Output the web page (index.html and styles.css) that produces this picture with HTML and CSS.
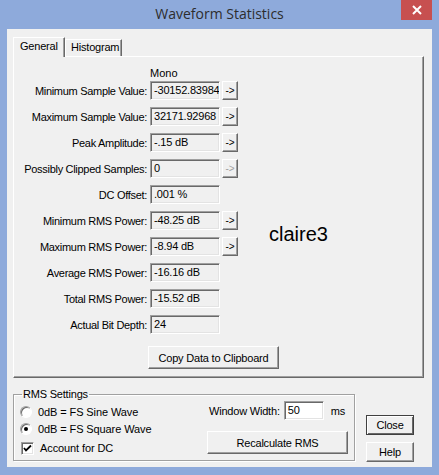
FILE: index.html
```html
<!DOCTYPE html>
<html lang="en">
<head>
    <meta charset="UTF-8">
    <title>Waveform Statistics</title>
    <link rel="stylesheet" href="styles.css">
</head>
<body>
    <div class="window">
        <div class="titlebar">
            <span class="title">Waveform Statistics</span>
            <button class="close-x" aria-label="Close">
                <svg width="10" height="10" viewBox="0 0 10 10"><path d="M1 1 L9 9 M9 1 L1 9" stroke="#fff" stroke-width="2" fill="none"/></svg>
            </button>
        </div>

        <div class="client">
            <div class="tabs">
                <div class="tab active">General</div>
                <div class="tab">Histogram</div>
            </div>

            <div class="panel">
                <div class="stats">
                    <div class="col-head">Mono</div>

                    <div class="row">
                        <span class="label">Minimum Sample Value:</span>
                        <span class="field">-30152.83984</span>
                        <button class="arrow">-&gt;</button>
                    </div>
                    <div class="row">
                        <span class="label">Maximum Sample Value:</span>
                        <span class="field">32171.92968</span>
                        <button class="arrow">-&gt;</button>
                    </div>
                    <div class="row">
                        <span class="label">Peak Amplitude:</span>
                        <span class="field">-.15 dB</span>
                        <button class="arrow">-&gt;</button>
                    </div>
                    <div class="row">
                        <span class="label">Possibly Clipped Samples:</span>
                        <span class="field">0</span>
                        <button class="arrow disabled">-&gt;</button>
                    </div>
                    <div class="row">
                        <span class="label">DC Offset:</span>
                        <span class="field">.001 %</span>
                    </div>
                    <div class="row">
                        <span class="label">Minimum RMS Power:</span>
                        <span class="field">-48.25 dB</span>
                        <button class="arrow">-&gt;</button>
                    </div>
                    <div class="row">
                        <span class="label">Maximum RMS Power:</span>
                        <span class="field">-8.94 dB</span>
                        <button class="arrow">-&gt;</button>
                    </div>
                    <div class="row">
                        <span class="label">Average RMS Power:</span>
                        <span class="field">-16.16 dB</span>
                    </div>
                    <div class="row">
                        <span class="label">Total RMS Power:</span>
                        <span class="field">-15.52 dB</span>
                    </div>
                    <div class="row">
                        <span class="label">Actual Bit Depth:</span>
                        <span class="field">24</span>
                    </div>

                    <button class="btn copy">Copy Data to Clipboard</button>
                </div>

                <div class="note">claire3</div>
            </div>

            <div class="bottom">
                <fieldset class="group">
                    <legend>RMS Settings</legend>
                    <div class="options">
                        <div class="opt"><span class="radio"></span>0dB = FS Sine Wave</div>
                        <div class="opt"><span class="radio checked"></span>0dB = FS Square Wave</div>
                        <div class="opt check-row">
                            <span class="checkbox">
                                <svg width="9" height="9" viewBox="0 0 9 9"><path d="M1 4 L3 6.5 L8 1.5" stroke="#000" stroke-width="1.8" fill="none"/></svg>
                            </span>Account for DC
                        </div>
                    </div>
                    <div class="rms-right">
                        <div class="width-row">
                            <span>Window Width:</span>
                            <span class="input">50</span>
                            <span class="unit">ms</span>
                        </div>
                        <button class="btn recalc">Recalculate RMS</button>
                    </div>
                </fieldset>

                <div class="dlg-buttons">
                    <button class="btn default">Close</button>
                    <button class="btn">Help</button>
                </div>
            </div>
        </div>
    </div>
</body>
</html>
```

FILE: styles.css
```css
/* Base */
* {
    box-sizing: border-box;
    margin: 0;
    padding: 0;
}

body {
    background: #8eaadb;
    font-family: 'Liberation Sans', Arial, sans-serif;
    font-size: 11px;
    color: #000;
    width: 439px;
    height: 475px;
    overflow: hidden;
}

button {
    font-family: inherit;
    font-size: 11px;
    color: #000;
}

/* Window frame */
.titlebar {
    height: 29px;
    display: grid;
    grid-template-columns: 1fr auto 1fr;
}

.title {
    grid-column: 2;
    font-family: 'Open Sans', sans-serif;
    font-size: 14px;
    color: #2d2d2d;
    line-height: 27px;
}

.close-x {
    grid-column: 3;
    justify-self: end;
    align-self: start;
    width: 31px;
    height: 20px;
    margin-right: 7px;
    background: #c75050;
    border: none;
    display: flex;
    align-items: center;
    justify-content: center;
}

.client {
    margin: 0 7px;
    height: 438px;
    background: #f0f0f0;
    padding: 8px 8px 0 6px;
}

/* Tabs */
.tabs {
    display: flex;
    align-items: flex-end;
    height: 19px;
    position: relative;
    z-index: 1;
}

.tab {
    height: 17px;
    padding: 0 5px;
    line-height: 15px;
    border: 1px solid #fff;
    border-right-color: #696969;
    border-bottom: none;
    box-shadow: inset -1px 0 0 #a0a0a0;
    background: #f0f0f0;
    letter-spacing: -0.2px;
}

.tab.active {
    height: 20px;
    padding: 0 6px 0 6px;
    line-height: 17px;
    margin-bottom: -1px;
    width: 52px;
}

.tab:not(.active) {
    width: 57px;
}

.panel {
    height: 322px;
    border: 1px solid;
    border-color: #fff #696969 #696969 #fff;
    box-shadow: inset -1px -1px 0 #a0a0a0;
    display: flex;
    padding-top: 8px;
}

/* Statistics rows */
.stats {
    width: 255px;
    display: flex;
    flex-direction: column;
}

.col-head {
    margin-left: 136px;
    height: 16px;
    line-height: 16px;
}

.row {
    display: flex;
    align-items: center;
    height: 19px;
    margin-bottom: 7px;
}

.label {
    width: 133px;
    text-align: right;
    letter-spacing: -0.3px;
    white-space: nowrap;
    margin-right: 3px;
}

.field {
    width: 70px;
    height: 19px;
    padding: 2px 0 0 3px;
    overflow: hidden;
    white-space: nowrap;
    border: 1px solid;
    border-color: #a0a0a0 #fff #fff #a0a0a0;
    box-shadow: inset 1px 1px 0 #696969, inset -1px -1px 0 #e3e3e3;
    letter-spacing: -0.2px;
}

.arrow {
    width: 16px;
    height: 19px;
    margin-left: 2px;
    background: #f0f0f0;
    border: 1px solid;
    border-color: #fff #696969 #696969 #fff;
    box-shadow: inset -1px -1px 0 #a0a0a0;
    font-size: 10px;
    line-height: 15px;
}

.arrow.disabled {
    color: #a0a0a0;
}

.btn {
    background: #f0f0f0;
    border: 1px solid;
    border-color: #fff #696969 #696969 #fff;
    box-shadow: inset -1px -1px 0 #a0a0a0;
    letter-spacing: -0.2px;
}

.copy {
    margin: 5px 0 0 134px;
    width: 131px;
    height: 23px;
}

.note {
    margin-top: 158px;
    font-family: 'Liberation Sans', Arial, sans-serif;
    font-size: 20px;
    line-height: 23px;
    height: 23px;
}

/* Bottom area */
.bottom {
    display: flex;
    margin-top: 10px;
}

.group {
    width: 342px;
    height: 73px;
    border: 1px solid #a0a0a0;
    box-shadow: inset 1px 1px 0 #fff, 1px 1px 0 #fff;
    padding: 0 6px 0 6px;
    display: flex;
}

.group legend {
    margin-left: 2px;
    padding: 0 1px;
    line-height: 13px;
    letter-spacing: -0.2px;
}

.options {
    display: flex;
    flex-direction: column;
    padding-top: 2px;
    width: 187px;
}

.opt {
    display: flex;
    align-items: center;
    height: 17px;
    letter-spacing: -0.1px;
}

.check-row {
    height: 20px;
    margin-top: 1px;
}

.radio {
    width: 12px;
    height: 12px;
    border-radius: 50%;
    border: 1px solid;
    border-color: #a0a0a0 #fff #fff #a0a0a0;
    box-shadow: inset 1px 1px 0 #696969;
    background: #fff;
    margin-right: 6px;
    display: flex;
    align-items: center;
    justify-content: center;
}

.radio.checked::after {
    content: "";
    width: 4px;
    height: 4px;
    border-radius: 50%;
    background: #000;
}

.checkbox {
    width: 13px;
    height: 13px;
    margin: 0 6px 0 1px;
    border: 1px solid;
    border-color: #a0a0a0 #fff #fff #a0a0a0;
    box-shadow: inset 1px 1px 0 #696969, inset -1px -1px 0 #e3e3e3;
    background: #fff;
    display: flex;
    align-items: center;
    justify-content: center;
}

.rms-right {
    display: flex;
    flex-direction: column;
    padding-top: 0;
}

.width-row {
    display: flex;
    align-items: center;
    height: 19px;
    margin-left: 2px;
    letter-spacing: -0.2px;
}

.input {
    width: 40px;
    height: 19px;
    margin-left: 4px;
    padding: 2px 0 0 3px;
    background: #fff;
    border: 1px solid;
    border-color: #a0a0a0 #fff #fff #a0a0a0;
    box-shadow: inset 1px 1px 0 #696969, inset -1px -1px 0 #e3e3e3;
}

.unit {
    margin-left: 7px;
}

.recalc {
    margin-top: 11px;
    width: 141px;
    height: 23px;
}

.dlg-buttons {
    display: flex;
    flex-direction: column;
    margin: 27px 0 0 11px;
}

.dlg-buttons .btn {
    width: 48px;
    height: 20px;
    margin-bottom: 7px;
}

.dlg-buttons .default {
    border-color: #404040;
    box-shadow: inset 1px 1px 0 #fff, inset -1px -1px 0 #696969;
}
```
